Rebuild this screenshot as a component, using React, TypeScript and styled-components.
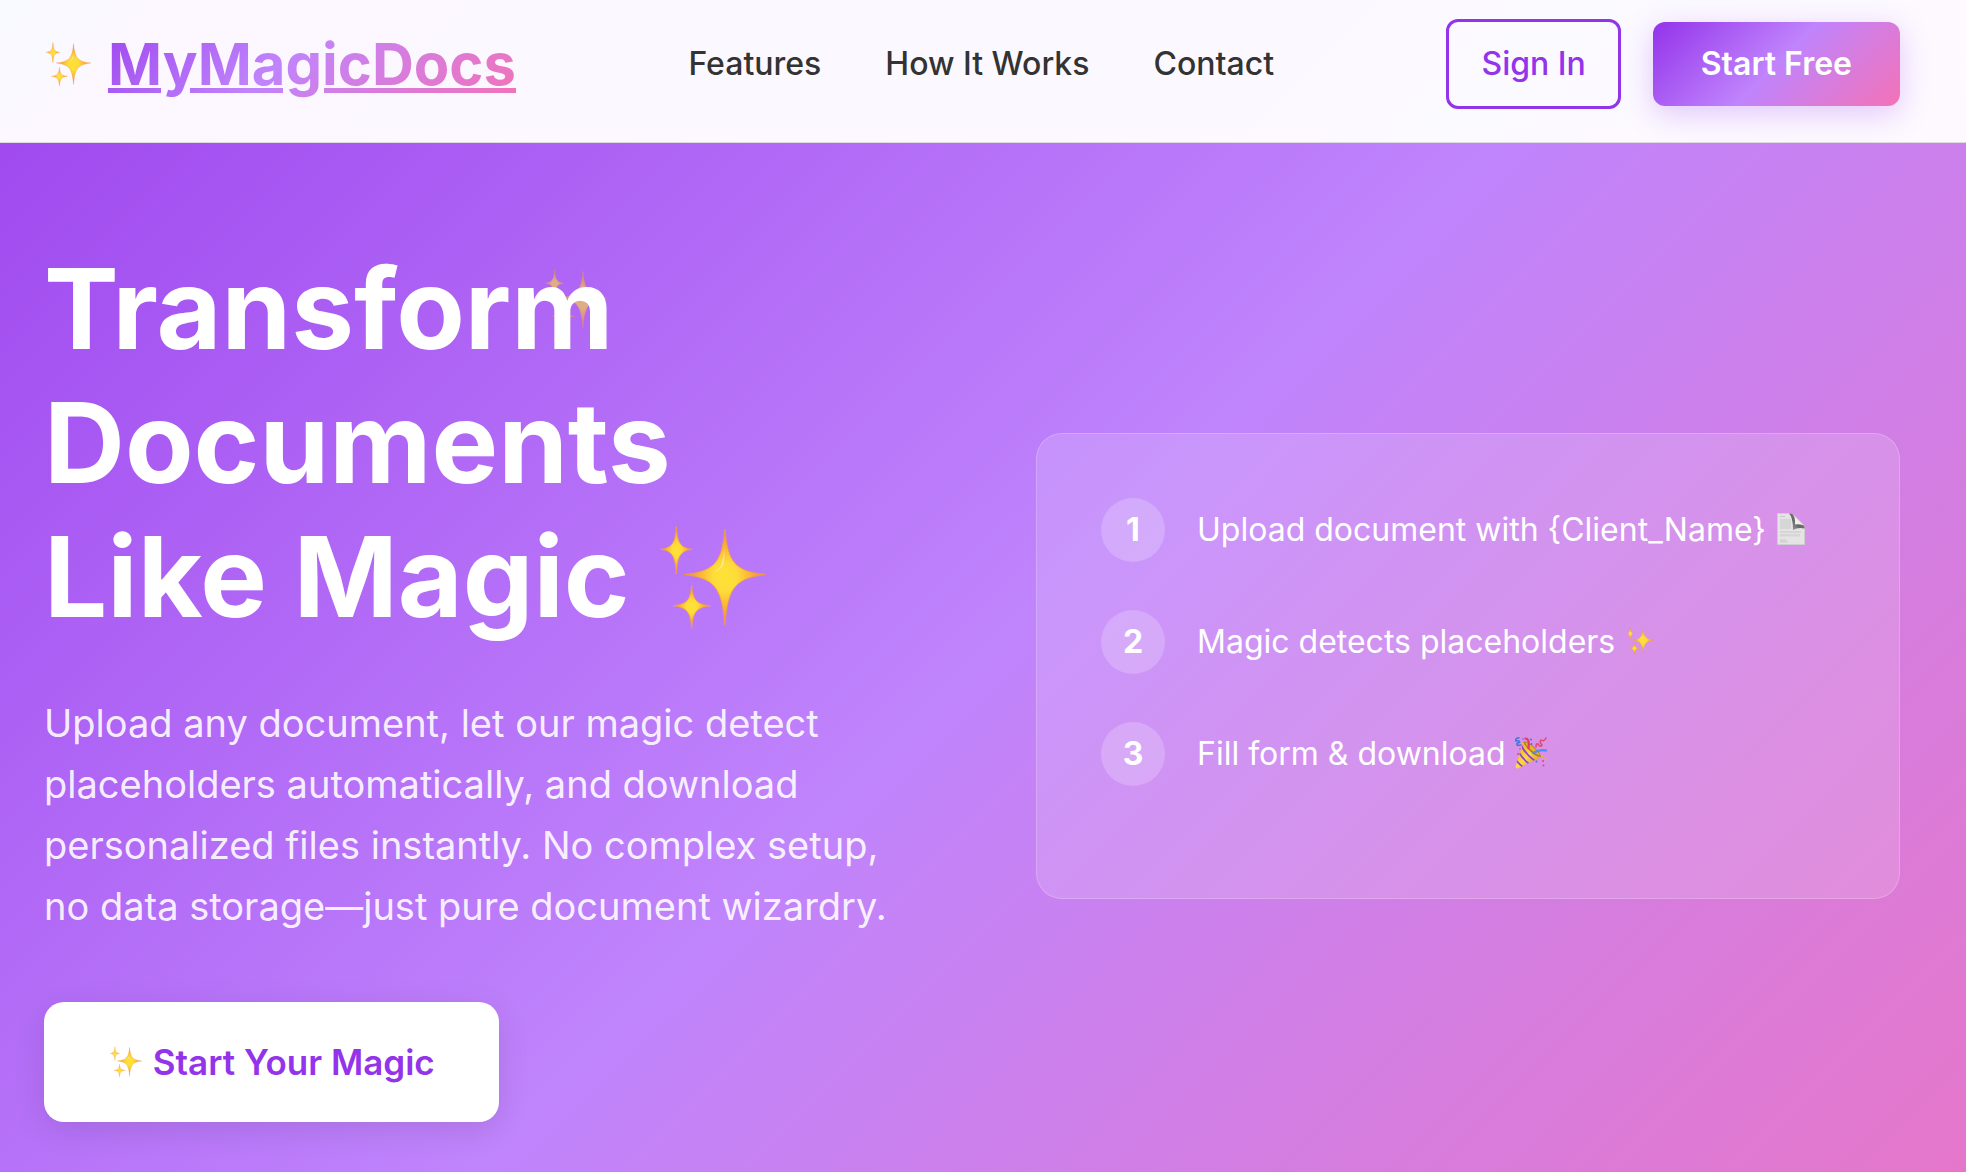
import React from 'react';
import styled, { createGlobalStyle } from 'styled-components';

const magicGradient = 'linear-gradient(135deg, #9333ea 0%, #c084fc 50%, #f472b6 100%)';
const brandGradient = 'linear-gradient(135deg, #9333ea -13%, #c084fc 43%, #f472b6 100%)';
const heroGradient = 'linear-gradient(135deg, #9333ea -20%, #c084fc 50%, #f472b6 120%)';

const GlobalStyle = createGlobalStyle`
  *, *::before, *::after { box-sizing: border-box; margin: 0; padding: 0; }
  body {
    font-family: Inter, "Liberation Sans", sans-serif;
    font-size: 32px;
    color: #333;
    background: #fff;
  }
`;

const Page = styled.div`
  display: flex;
  flex-direction: column;
  min-height: 100vh;
`;

const Header = styled.header`
  display: flex;
  align-items: center;
  justify-content: space-between;
  padding: 19px 66px 33px 44px;
  background: linear-gradient(135deg, #f8f9ff 0%, #fdf7ff 10%, #fbf8ff 30%, #fbfaff 75%, #fef9ff 100%);
  border-bottom: 1px solid #e0dae4;
`;

const Brand = styled.a`
  display: flex;
  align-items: center;
  gap: 16px;
  text-decoration: none;
`;

const BrandIcon = styled.span`
  display: flex;
  justify-content: center;
  width: 48px;
`;

/* The underline shares the wordmark's gradient and skips the y and g descenders. */
const BrandName = styled.span`
  position: relative;
  font-size: 58px;
  font-weight: 700;
  line-height: 90px;
  color: transparent;
  background: ${brandGradient};
  background-clip: text;
  -webkit-background-clip: text;

  &::after {
    content: '';
    position: absolute;
    inset: 0;
    background: ${brandGradient};
    mask:
      linear-gradient(#000 0 0) 0 69px / 53px 5px no-repeat,
      linear-gradient(#000 0 0) 82px 69px / 93px 5px no-repeat,
      linear-gradient(#000 0 0) 100% 69px / calc(100% - 216px) 5px no-repeat;
  }
`;

const Nav = styled.nav`
  display: flex;
  gap: 64px;
  line-height: 40px;
`;

const NavLink = styled.a`
  color: #333;
  font-weight: 500;
  text-decoration: none;
`;

const Actions = styled.div`
  display: flex;
  align-items: center;
  gap: 32px;
`;

const HeaderButton = styled.button<{ $primary?: boolean }>`
  font: inherit;
  font-weight: ${(p) => (p.$primary ? 600 : 500)};
  line-height: 40px;
  padding: ${(p) => (p.$primary ? '22px 48px' : '22px 32px')};
  border: ${(p) => (p.$primary ? 'none' : '3px solid #9333ea')};
  border-radius: 12px;
  color: ${(p) => (p.$primary ? '#fff' : '#9333ea')};
  background: ${(p) => (p.$primary ? magicGradient : 'transparent')};
  box-shadow: ${(p) => (p.$primary ? '0 8px 30px rgba(147, 51, 234, 0.25)' : 'none')};
  cursor: pointer;
`;

const Hero = styled.main`
  flex: 1;
  display: grid;
  grid-template-columns: 1fr 1fr;
  gap: 128px;
  align-items: center;
  padding: 98px 66px 82px 44px;
  color: #fff;
  background: ${heroGradient};
`;

const Title = styled.h1`
  position: relative;
  z-index: 0;
  margin-bottom: 50px;
  font-size: 112px;
  font-weight: 700;
  line-height: 134px;
`;

const FloatingSparkles = styled.span`
  position: absolute;
  z-index: -1;
  top: 28px;
  left: 501px;
  display: flex;
  opacity: 0.6;
`;

const Lead = styled.p`
  margin-bottom: 97px;
  font-size: 38px;
  line-height: 61px;
  color: rgba(255, 255, 255, 0.9);
`;

const CallToAction = styled.div`
  font-size: 35px;
  line-height: 56px;
`;

const CallLink = styled.a`
  padding: 39px 64px;
  border-radius: 20px;
  font-weight: 600;
  text-decoration: none;
  color: #9333ea;
  background: #fff;
  box-shadow: 0 8px 32px rgba(0, 0, 0, 0.1);
`;

const Steps = styled.ol`
  list-style: none;
  padding: 64px;
  border: 1px solid rgba(255, 255, 255, 0.2);
  border-radius: 26px;
  background: rgba(255, 255, 255, 0.15);
`;

const Step = styled.li`
  display: flex;
  align-items: center;
  gap: 32px;
  margin-bottom: 48px;
`;

const StepNumber = styled.span`
  display: grid;
  place-items: center;
  flex: none;
  width: 64px;
  height: 64px;
  border-radius: 50%;
  font-weight: 700;
  background: rgba(255, 255, 255, 0.2);
`;

const Glyph = styled.svg<{ $size: number; $drop?: number; $inset?: number }>`
  width: ${(p) => p.$size}px;
  height: ${(p) => p.$size}px;
  margin: 0 ${(p) => p.$inset ?? 0}px;
  vertical-align: ${(p) => -(p.$drop ?? 0)}px;
`;

type IconProps = { size: number; drop?: number; inset?: number };

function star(cx: number, cy: number, l: number, r: number, t: number, b: number) {
  const k = (n: number) => n * 0.25;
  const s = (n: number) => n * 0.08;
  return [
    `M${cx} ${cy - t}`,
    `C${cx + s(r)} ${cy - k(t)} ${cx + k(r)} ${cy - s(t)} ${cx + r} ${cy}`,
    `C${cx + k(r)} ${cy + s(b)} ${cx + s(r)} ${cy + k(b)} ${cx} ${cy + b}`,
    `C${cx - s(l)} ${cy + k(b)} ${cx - k(l)} ${cy + s(b)} ${cx - l} ${cy}`,
    `C${cx - k(l)} ${cy - s(t)} ${cx - s(l)} ${cy - k(t)} ${cx} ${cy - t}Z`,
  ].join('');
}

function Sparkles({ size, drop, inset }: IconProps) {
  const id = React.useId();
  return (
    <Glyph $size={size} $drop={drop} $inset={inset} viewBox="0 0 107 105" aria-hidden="true">
      <defs>
        <radialGradient id={id}>
          <stop offset="0" stopColor="#ffe135" />
          <stop offset="0.3" stopColor="#fddc3a" />
          <stop offset="0.6" stopColor="#fbb636" />
          <stop offset="1" stopColor="#ee8444" />
        </radialGradient>
      </defs>
      <g fill={`url(#${id})`} stroke="#f2a03c" strokeWidth="0.8" strokeLinejoin="round">
        <path d={star(65.5, 49, 41, 41, 46, 51)} />
        <path d={star(16.5, 23.5, 16, 16, 23, 25)} />
        <path d={star(32, 80.5, 19, 19, 21, 23)} />
      </g>
      <path d="M62 39Q64 31 65 22Q65.500 33 64 39Q61 45 54 46Q60 44 62 39Z" fill="#fff" opacity="0.4" />
    </Glyph>
  );
}

function PageIcon({ size, drop }: IconProps) {
  const id = React.useId();
  return (
    <Glyph $size={size} $drop={drop} viewBox="0 0 32 32" aria-hidden="true">
      <defs>
        <linearGradient id={id} x1="0" y1="1" x2="1" y2="0">
          <stop offset="0" stopColor="#aaa" />
          <stop offset="0.45" stopColor="#666" />
          <stop offset="1" stopColor="#999" />
        </linearGradient>
      </defs>
      <path d="M2.500 .5H17L29.500 13V31.500H2.500Z" fill="#e4e4e4" stroke="#cfcfcf" />
      <path d="M5 3.500h5M5 27h6M5 28.800h8" stroke="#c9c9c9" />
      <path d="M5 6h11v10H5zM5 18h21v2H5zM5 21h20v2.500H5z" fill="#d6d6d6" />
      <path d="M14 .5Q18 4 18 17Q23 14 29.500 15.500V13L17 .5Z" fill={`url(#${id})`} />
      <path d="M17.500 1L29 12.500Q24 10.500 20 11.500Q20.500 4 17.500 1Z" fill="#efefef" />
    </Glyph>
  );
}

function PartyIcon({ size, drop }: IconProps) {
  const id = React.useId();
  return (
    <Glyph $size={size} $drop={drop} viewBox="0 0 32 32" aria-hidden="true">
      <defs>
        <linearGradient id={id} x1="0" y1="0" x2="1" y2="1">
          <stop offset="0" stopColor="#d99a1c" />
          <stop offset="0.5" stopColor="#ffd84a" />
          <stop offset="1" stopColor="#c47f12" />
        </linearGradient>
        <clipPath id={`${id}c`}>
          <path d="M8.500 4.500Q18 8 26 20L3 31.500Q.5 32 .5 29Z" />
        </clipPath>
      </defs>
      <path d="M8.500 4.500Q18 8 26 20L3 31.500Q.5 32 .5 29Z" fill={`url(#${id})`} />
      <g clipPath={`url(#${id}c)`} fill="none" stroke="#8a45c9" strokeWidth="1.700">
        <path d="M6 8Q11 18 20 24M3.500 15Q8 22 14 27M1 23Q4 27 8 30" />
      </g>
      <path d="M8.500 4.500Q12 4 19 10Q26 17 26 20Q20 20 14 13Q9 8 8.500 4.500Z" fill="#b8761a" />
      <path d="M10 5.500Q14 6 19 11Q24 16 25 19Q20 17 15 12Q11 8 10 5.500Z" fill="#e8b331" />
      <g fill="none" strokeLinecap="round">
        <path d="M4 .8Q0 1 1 4Q5 3 4.500 5.500Q1 5.500 2.500 8.500L6 8" stroke="#3c78dc" strokeWidth="1.600" />
        <path d="M18.500 16Q24 12 31.500 13.500" stroke="#4c8df0" strokeWidth="2.200" />
        <path d="M10.500 1.500Q15 2 13.500 11.500" stroke="#e6395b" strokeWidth="2.200" />
        <path d="M21 10Q21 6 23 7Q25 11 27 8Q24 5 26 3Q29 5 31 1" stroke="#e0486e" strokeWidth="1.500" />
      </g>
      <g fill="#3c78dc"><circle cx="16" cy="2.500" r="1" /><circle cx="16.500" cy="7" r="1" /><circle cx="21.500" cy="24.500" r="1" /><circle cx="8" cy="2" r=".8" /></g>
      <g fill="#e0486e"><circle cx="3" cy="17" r="1" /><circle cx="28" cy="24" r="1" /><circle cx="28.500" cy="28.500" r="1" /><circle cx="5" cy="12" r=".8" /></g>
      <g fill="#f0b92e"><circle cx="27" cy="19.500" r="1" /><circle cx="30.500" cy="21.500" r="1" /><circle cx="7" cy="6" r="1" /></g>
    </Glyph>
  );
}

const navItems = ['Features', 'How It Works', 'Contact'];

const steps = [
  { text: 'Upload document with {Client_Name}', icon: <PageIcon size={32} drop={4} /> },
  { text: 'Magic detects placeholders', icon: <Sparkles size={28} drop={2} inset={2} /> },
  { text: 'Fill form & download', icon: <PartyIcon size={32} drop={4} /> },
];

export default function App() {
  return (
    <Page>
      <GlobalStyle />
      <Header>
        <Brand href="#">
          <BrandIcon><Sparkles size={45} /></BrandIcon>
          <BrandName>MyMagicDocs</BrandName>
        </Brand>
        <Nav>
          {navItems.map((item) => (
            <NavLink key={item} href="#">{item}</NavLink>
          ))}
        </Nav>
        <Actions>
          <HeaderButton type="button">Sign In</HeaderButton>
          <HeaderButton type="button" $primary>Start Free</HeaderButton>
        </Actions>
      </Header>
      <Hero>
        <div>
          <Title>
            <FloatingSparkles><Sparkles size={62} /></FloatingSparkles>
            Transform
            <br />
            Documents
            <br />
            Like Magic <Sparkles size={106} drop={14} inset={4} />
          </Title>
          <Lead>
            Upload any document, let our magic detect placeholders automatically, and download
            personalized files instantly. No complex setup, no data storage—just pure document
            wizardry.
          </Lead>
          <CallToAction>
            <CallLink href="#"><Sparkles size={32} drop={3} inset={2} /> Start Your Magic</CallLink>
          </CallToAction>
        </div>
        <Steps>
          {steps.map((step, i) => (
            <Step key={step.text}>
              <StepNumber>{i + 1}</StepNumber>
              <span>{step.text} {step.icon}</span>
            </Step>
          ))}
        </Steps>
      </Hero>
    </Page>
  );
}
